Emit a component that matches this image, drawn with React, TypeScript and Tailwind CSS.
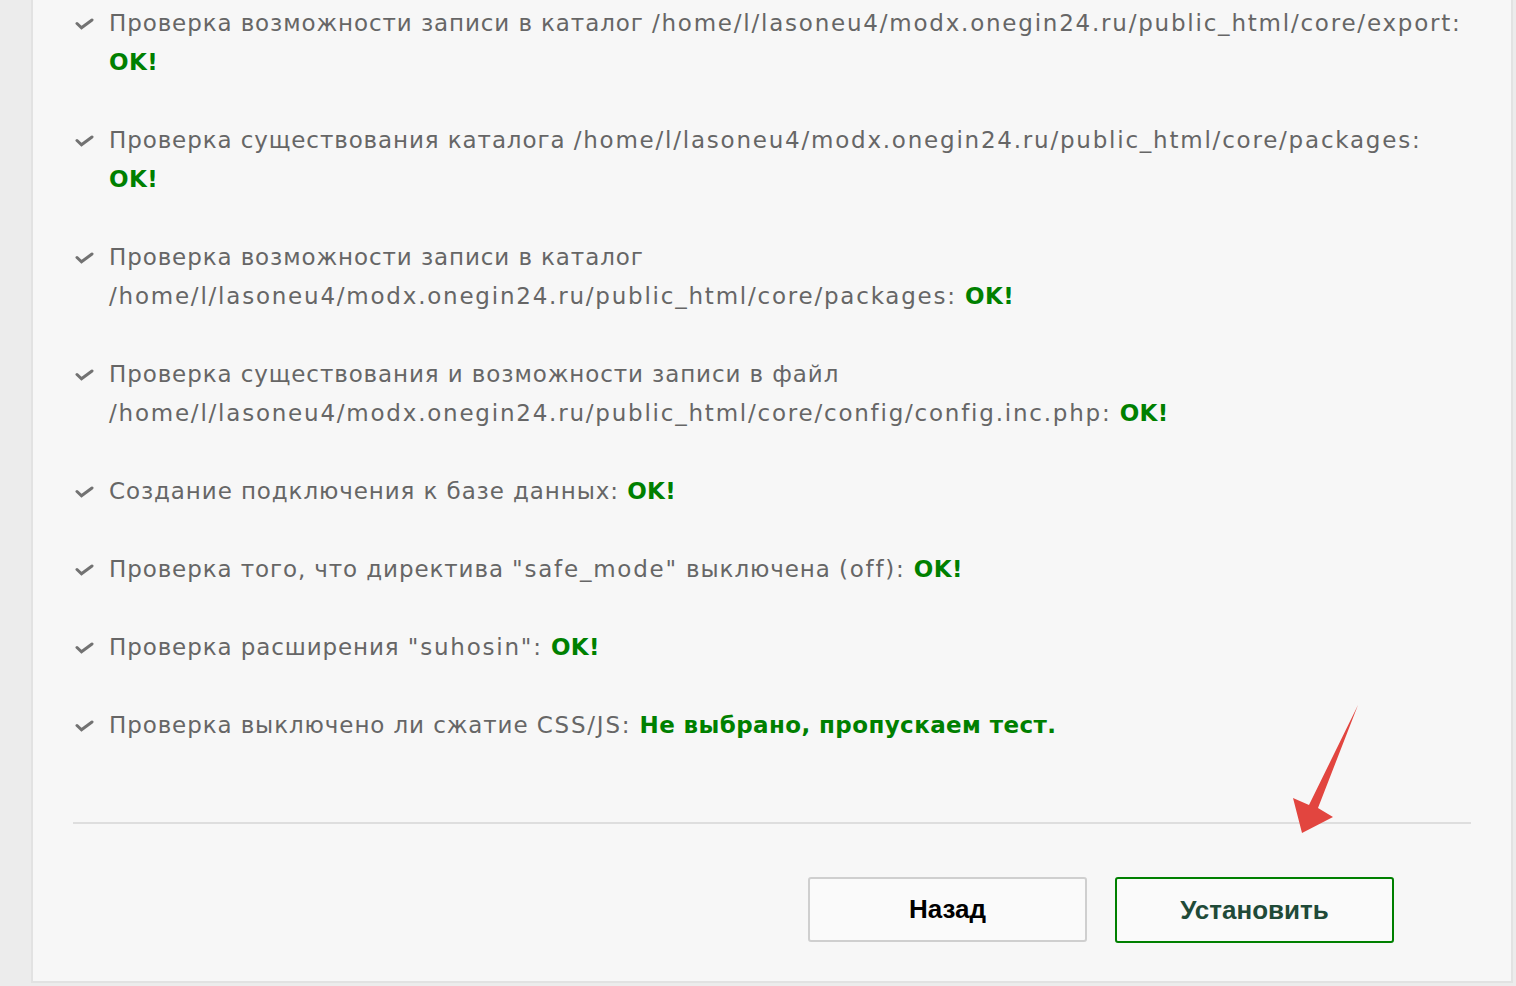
import React from "react";

// latin runs are wider in the original font, so they get more tracking
const L = ({ children }: { children: React.ReactNode }) => (
  <span className="tracking-[1.78px]">{children}</span>
);

type Check = { text: React.ReactNode; result: string };

const checks: Check[] = [
  {
    text: (
      <>
        Проверка возможности записи в каталог <L>/home/l/lasoneu4/modx.onegin24.ru/public_html/core/export:</L>
      </>
    ),
    result: "OK!",
  },
  {
    text: (
      <>
        Проверка существования каталога <L>/home/l/lasoneu4/modx.onegin24.ru/public_html/core/packages:</L>
      </>
    ),
    result: "OK!",
  },
  {
    text: (
      <>
        Проверка возможности записи в каталог
        <br />
        <L>/home/l/lasoneu4/modx.onegin24.ru/public_html/core/packages:</L>
      </>
    ),
    result: "OK!",
  },
  {
    text: (
      <>
        Проверка существования и возможности записи в файл
        <br />
        <L>/home/l/lasoneu4/modx.onegin24.ru/public_html/core/config/config.inc.php:</L>
      </>
    ),
    result: "OK!",
  },
  { text: "Создание подключения к базе данных:", result: "OK!" },
  {
    text: (
      <>
        Проверка того, что директива <L>"safe_mode"</L> выключена <L>(off):</L>
      </>
    ),
    result: "OK!",
  },
  {
    text: (
      <>
        Проверка расширения <L>"suhosin":</L>
      </>
    ),
    result: "OK!",
  },
  {
    text: (
      <>
        Проверка выключено ли сжатие <L>CSS/JS:</L>
      </>
    ),
    result: "Не выбрано, пропускаем тест.",
  },
];

const CheckIcon = () => (
  <svg width="20" height="12" viewBox="0 0 20 12" className="shrink-0 mt-[14px]">
    <path d="M3 5.5 L7.5 9.8 L18 2" fill="none" stroke="#727272" strokeWidth="3" strokeLinecap="round" strokeLinejoin="miter" />
  </svg>
);

const App = () => {
  return (
    <div className="relative min-h-[986px] w-full bg-[#ececec] overflow-hidden">
      <div className="ml-[31px] w-[1482px] h-[983px] bg-[#f7f7f7] border-l-2 border-r-2 border-b-2 border-[#e2e2e2] px-[40px] pt-[4px]">
        <ul
          className="flex flex-col gap-[39px] text-[#666] text-[23px] leading-[39px] tracking-[0.9px]"
          style={{ fontFamily: '"DejaVu Sans", "Noto Sans", sans-serif' }}
        >
          {checks.map((c, i) => (
            <li key={i} className="flex items-start gap-[15px] pl-[1px]">
              <CheckIcon />
              <span>
                {c.text}{" "}
                <strong className="text-[#008000] font-bold tracking-[0.4px]">{c.result}</strong>
              </span>
            </li>
          ))}
        </ul>

        <div className="mt-[77px] h-[2px] bg-[#dedede]" />

        <div
          className="flex justify-end gap-[28px] mt-[53px] pr-[77px]"
          style={{ fontFamily: '"Liberation Sans", Arial, sans-serif' }}
        >
          <button className="w-[279px] h-[65px] rounded-[3px] border-2 border-[#cfcfcf] bg-[#fafafa] text-[26px] font-bold text-black">
            Назад
          </button>
          <button className="w-[279px] h-[66px] rounded-[3px] border-2 border-[#008000] bg-[#fafafa] text-[26px] font-bold text-[#1f4a38]">
            Установить
          </button>
        </div>
      </div>

      <svg className="absolute left-0 top-0 pointer-events-none" width="1516" height="986">
        <path d="M1358 705 L1318 808 L1333 817 L1302 833 L1293 798 L1309 805 Z" fill="#e2453f" />
      </svg>
    </div>
  );
};

export default App;
